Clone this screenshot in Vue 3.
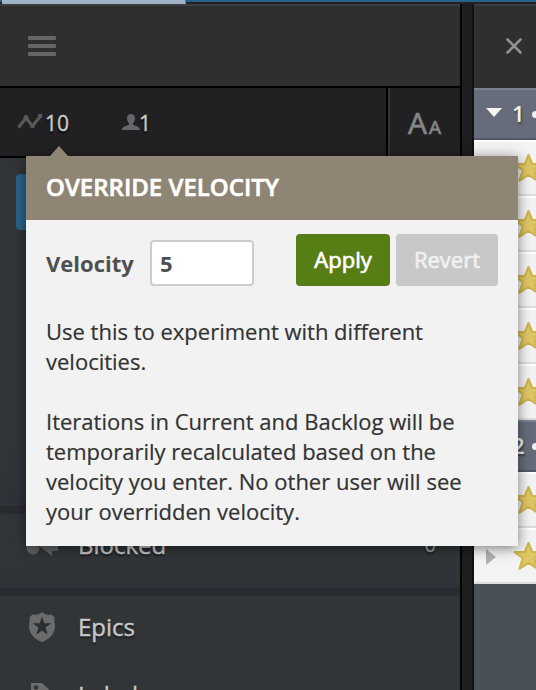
<script setup>
import { ref } from 'vue'

const velocity = ref('5')
const iterations = [
  { number: 1, stories: 5 },
  { number: 2, stories: 2 },
]
</script>

<template>
  <div class="app">
    <header class="topbar"><div class="tab"></div></header>
    <div class="columns">
      <aside class="sidebar">
        <div class="menu-head">
          <div class="burger"><i></i><i></i><i></i></div>
        </div>
        <div class="stats">
          <div class="stat-group">
            <div class="stat velocity-stat">
              <svg width="26" height="18" viewBox="0 0 26 18"><path d="M1.500 15.500L9 6L15.500 14L23.500 4" fill="none" stroke="#59595a" stroke-width="3" /><circle cx="9" cy="5.500" r="2.500" fill="#59595a" /><circle cx="15.500" cy="14" r="2.300" fill="#59595a" /><rect x="21" y="2" width="4" height="4" fill="#59595a" /></svg>
              <span>10</span>
            </div>
            <div class="stat members-stat">
              <svg width="18" height="16" viewBox="0 0 18 16"><path d="M9 0C6.200 0 5 1.700 5 4.300C5 6.700 6.200 8.300 7 9.300V10.500C5.500 11.900 0 12 0 16H18C18 12 12.500 11.900 11 10.500V9.300C11.900 8.300 13 6.700 13 4.300C13 1.700 11.800 0 9 0Z" fill="#666668" /></svg>
              <span>1</span>
            </div>
          </div>
          <div class="font-size"><span class="big">A</span><span class="small">A</span></div>
        </div>
        <nav class="menu">
          <div class="add"><button class="add-story"></button></div>
          <div class="item blocked">
            <svg width="32" height="22" viewBox="0 0 32 22"><circle cx="7" cy="14" r="6.500" fill="#5e6062" /><path d="M13 12L24 2V8H32V17H26V22Z" fill="#5e6062" /></svg>
            <span>Blocked</span><span class="count">0</span>
          </div>
          <div class="item epics">
            <svg width="26" height="30" viewBox="0 0 26 30"><path d="M13 0C15.500 2.300 19 3.500 22.500 2.500L25.500 5.200C24.800 8 26 10 26 14C26 22 20 27.500 13 30C6 27.500 0 22 0 14C0 10 1.200 8 .5 5.200L3.500 2.500C7 3.500 10.500 2.300 13 0Z" fill="#696b6c" /><path d="M13 4.500L15.200 11.300L22.300 11.300L16.600 15.500L18.700 22.700L13 18.500L7.300 22.700L9.400 15.500L3.700 11.300L10.800 11.300Z" fill="#2b2e30" /></svg>
            <span>Epics</span>
          </div>
          <div class="item labels">
            <svg width="22" height="24" viewBox="0 0 22 24"><path fill-rule="evenodd" d="M0 0H11L22 10L10 24L0 12ZM5 2.200A2.300 2.300 0 1 0 5 6.800A2.300 2.300 0 1 0 5 2.200Z" fill="#696b6c" /></svg>
            <span>Labels</span>
          </div>
        </nav>
      </aside>
      <div class="gutter"></div>
      <main class="panel">
        <div class="panel-head">
          <svg width="16" height="16" viewBox="0 0 16 16"><path d="M1.500 1.500L14.500 14.500M14.500 1.500L1.500 14.500" stroke="#929292" stroke-width="2.600" stroke-linecap="round" /></svg>
        </div>
        <section v-for="it in iterations" :key="it.number">
          <div class="iteration">
            <svg width="16" height="9" viewBox="0 0 16 9"><path d="M0 0H16L8 9Z" fill="#f7f5f3" /></svg>
            <span class="number">{{ it.number }}</span><i class="dot"></i>
          </div>
          <div v-for="n in it.stories" :key="n" class="story">
            <svg width="10" height="16" viewBox="0 0 10 16"><path d="M0 0L10 8L0 16Z" fill="#b0b0b0" /></svg>
            <svg class="star" width="31" height="30" viewBox="0 0 31 30"><path d="M15.500 1.800L19.300 11H29.500L21.300 17.300L24.600 27.800L15.500 21.800L6.400 27.800L9.700 17.300L1.500 11H11.700Z" fill="#dfc664" stroke="#ceb54d" stroke-width="2" stroke-linejoin="round" /></svg>
          </div>
        </section>
      </main>
    </div>

    <div class="popover">
      <h2>OVERRIDE VELOCITY</h2>
      <div class="body">
        <form class="controls" @submit.prevent>
          <label for="velocity">Velocity</label>
          <input id="velocity" v-model="velocity" type="text" />
          <button class="apply">Apply</button>
          <button class="revert" disabled>Revert</button>
        </form>
        <p>Use this to experiment with different<br />velocities.</p>
        <p>Iterations in Current and Backlog will be<br />temporarily recalculated based on the<br />velocity you enter. No other user will see<br />your overridden velocity.</p>
      </div>
    </div>
  </div>
</template>

<style>
body { overflow: hidden; }
</style>

<style scoped>
* { box-sizing: border-box; }
svg { display: block; flex: none; }
.app { position: relative; width: 536px; height: 690px; overflow: hidden; background: #222; font-family: "Open Sans", "Noto Sans", sans-serif; }
.topbar { height: 4px; padding-left: 2px; background: linear-gradient(#25618b 0 2px, #222 2px); }
.tab { width: 184px; height: 4px; background: #9fb5c7; clip-path: polygon(0 0, 183px 0, 100% 100%, 0 100%); }
.columns { display: flex; height: 686px; }
.sidebar { width: 460px; background: #313538; }
.menu-head { height: 84px; padding: 30px 28px 0; background: #2d2f30; border-top: 2px solid #3b3d3f; border-bottom: 2px solid #000; }
.burger { display: flex; flex-direction: column; gap: 4px; width: 28px; }
.burger i { height: 4px; border-radius: 1px; background: #666; }
.stats { display: flex; height: 70px; background: #212123; border-bottom: 2px solid #000; color: #c9c9c9; }
.stat-group { display: flex; width: 388px; padding-left: 17px; border-right: 2px solid #000; }
.stat { display: flex; align-items: center; font-size: 21px; line-height: 68px; text-shadow: 0 2px 2px #000; -webkit-text-stroke: .4px; }
.velocity-stat { width: 105px; gap: 2px; }
.velocity-stat svg { margin-top: -2px; }
.members-stat span { margin-left: -1px; }
.stat span { margin-top: 1px; }
.font-size { display: flex; align-items: baseline; width: 72px; padding-left: 18px; border-left: 2px solid #303236; color: #858585; line-height: 70px; -webkit-text-stroke: .7px; }
.big { font-size: 30px; }
.small { margin-left: 2px; font-size: 19px; }
.add { height: 356px; padding: 16px 16px 0; border-bottom: 8px solid #292b30; background: linear-gradient(#313538 85%, #2f3238); }
.add-story { display: block; width: 200px; height: 56px; border: 0; border-radius: 4px; background: #29638a; }
.item { display: flex; align-items: center; color: #c8c8c8; font-size: 24px; line-height: 30px; text-shadow: 0 2px 2px #151515; -webkit-text-stroke: .4px; }
.blocked { height: 82px; padding: 0 24px 12px 26px; gap: 20px; border-bottom: 8px solid #292b30; background: linear-gradient(#313538 60%, #2f3238); }
.count { margin-left: auto; font-size: 20px; color: #999; }
.epics { height: 62px; padding-left: 29px; gap: 23px; }
.labels { height: 68px; padding: 6px 0 0 31px; gap: 25px; }
.gutter { width: 14px; background: linear-gradient(90deg, #000 0 2px, #1e1e1e 2px 12px, #111 12px); }
.panel { flex: 1; min-width: 0; overflow: hidden; background: #495058; }
.panel-head { height: 84px; padding: 32px 0 0 32px; background: #2d2f30; border-top: 2px solid #3b3d3f; }
.iteration { display: flex; align-items: center; height: 52px; padding-left: 12px; border-top: 2px solid #7b828e; border-bottom: 2px solid #535966; background: #666c79; color: #f1f1f1; }
.iteration svg { margin-top: -3px; }
.number { width: 12px; margin: -2px 0 0 10px; font-size: 22px; font-weight: 600; line-height: 48px; text-shadow: 1px 2px 2px #3c414b; }
.dot { flex: none; width: 7px; height: 7px; margin-left: 8px; border-radius: 50%; background: #f1f1f1; }
.story { display: flex; align-items: center; height: 56px; padding: 2px 0 0 12px; overflow: hidden; border-top: 2px solid #fff; border-bottom: 2px solid #dcdcdc; background: #f3f3f3; }
.star { margin-left: 17px; margin-top: -2px; }
.popover { position: absolute; top: 156px; left: 26px; width: 492px; height: 390px; background: #f2f2f2; box-shadow: 0 2px 12px rgba(0, 0, 0, .5); }
.popover::before { content: ""; position: absolute; top: -10px; left: 24px; width: 18px; height: 10px; background: #8e8574; clip-path: polygon(50% 0, 100% 100%, 0 100%); }
h2 { height: 64px; margin: 0; padding-left: 20px; background: #8e8574; color: #fff; font-size: 24px; font-weight: 600; line-height: 62px; white-space: nowrap; -webkit-text-stroke: .6px; }
.body { padding: 14px 20px; }
.controls { display: flex; align-items: center; height: 52px; margin-bottom: 30px; }
label { width: 104px; padding-top: 6px; color: #4f4f50; font-size: 22px; font-weight: 700; }
input { width: 104px; height: 46px; margin: 6px 42px 0 0; padding: 0 8px 1px; border: 2px solid #ccc; border-radius: 4px; background: #fff; color: #4f4f50; font: 700 22px "Open Sans", sans-serif; }
button { height: 52px; padding: 0 0 3px; border: 0; border-radius: 4px; font: 400 22px "Open Sans", sans-serif; -webkit-text-stroke: .7px; }
.apply { width: 94px; margin-right: 6px; background: #577d15; color: #fff; }
.revert { width: 102px; background: #c8c8c8; color: #f1f1f1; }
p { margin: 0 0 30px; color: #333; font-size: 22px; line-height: 30px; white-space: nowrap; -webkit-text-stroke: .2px; }
</style>
